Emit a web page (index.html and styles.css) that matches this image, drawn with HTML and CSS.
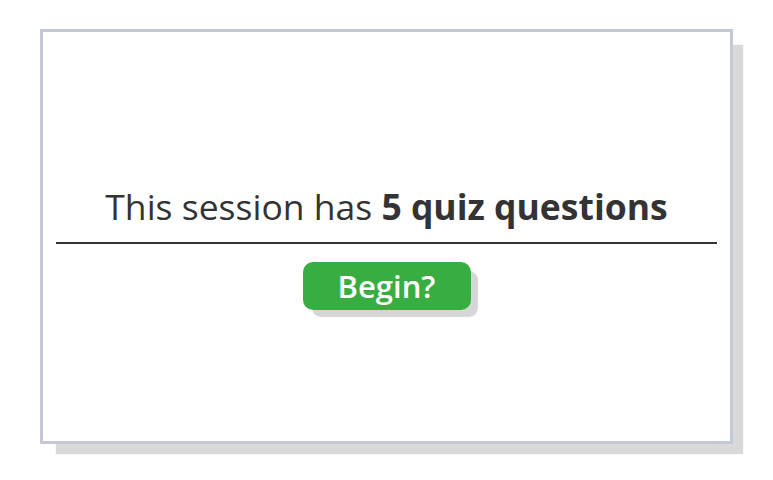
FILE: index.html
```html
<!DOCTYPE html>
<html lang="en">
<head>
    <meta charset="UTF-8">
    <meta name="viewport" content="width=device-width, initial-scale=1.0">
    <title>Quiz Session</title>
    <link rel="stylesheet" href="styles.css">
</head>
<body>
<div class="page">
    <div class="card">
        <p class="intro">This session has <strong>5 quiz questions</strong></p>
        <div class="rule"></div>
        <button class="begin" type="button">Begin?</button>
    </div>
</div>
</body>
</html>
```

FILE: styles.css
```css
body {
    margin: 0;
    background-color: #ffffff;
    font-family: 'Open Sans', 'Noto Sans', sans-serif;
}
.page {
    min-height: 480px;
    padding: 29px 0 0 40px;
    box-sizing: border-box;
}
.card {
    box-sizing: border-box;
    width: 693px;
    height: 415px;
    padding: 151px 13px 0;
    border: 3px solid #c3c9d6;
    background-color: #ffffff;
    box-shadow: 13px 13px 1px -3px #d9d9d9;
    display: flex;
    flex-direction: column;
    align-items: center;
}
.intro {
    margin: 0;
    font-size: 35.5px;
    line-height: 46px;
    color: #333333;
}
.intro strong {
    font-weight: 700;
}
.rule {
    align-self: stretch;
    height: 2px;
    margin-top: 13px;
    background-color: #333333;
}
.begin {
    width: 168px;
    height: 48px;
    margin-top: 18px;
    border: none;
    border-radius: 10px;
    background-color: #38ad41;
    box-shadow: 8px 8px 1px -1px #d6d6d6;
    color: #ffffff;
    font-family: 'Open Sans', 'Noto Sans', sans-serif;
    font-size: 31px;
    font-weight: 600;
    line-height: 44px;
    cursor: pointer;
}
```
